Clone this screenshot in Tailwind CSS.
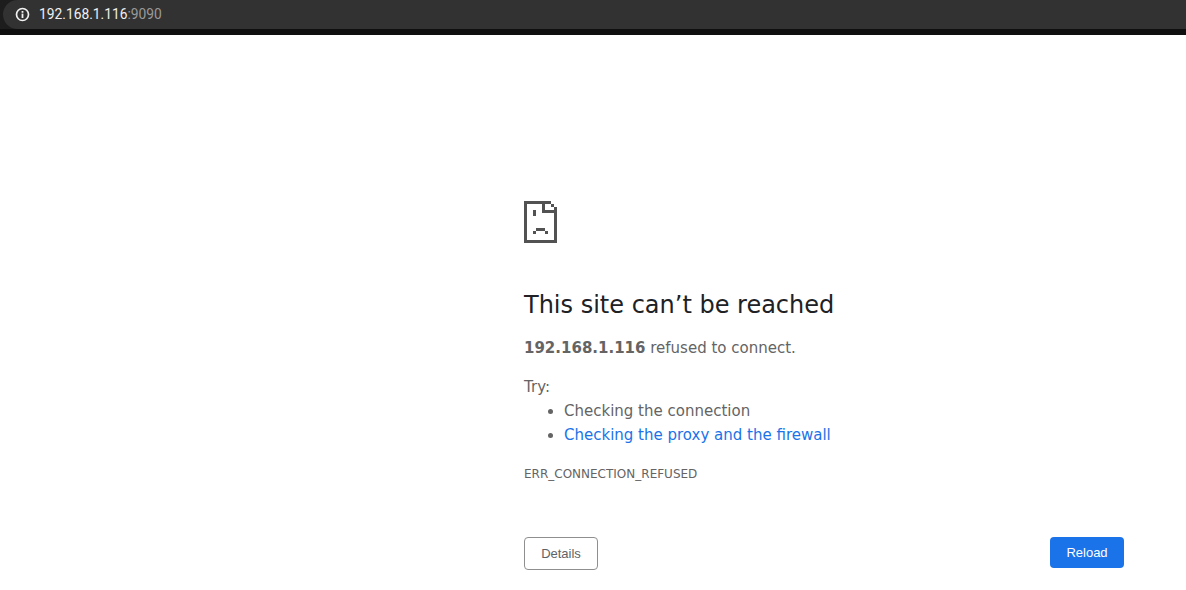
<!DOCTYPE html>
<html lang="en">
<head>
    <meta charset="UTF-8" />
    <title>192.168.1.116</title>
    <script src="https://cdn.jsdelivr.net/npm/@tailwindcss/browser@4"></script>
</head>
<body class="bg-white h-[590px] overflow-hidden font-['DejaVu_Sans',sans-serif]">
    <!-- address bar -->
    <div class="bg-[#0f0f0f] h-[35px]">
        <div class="bg-[#1d1d1d] h-[29px] pl-[3px]">
            <div class="h-[29px] bg-[#323232] rounded-l-[15px] flex items-center pl-[12px] gap-[9px] font-['Roboto',sans-serif] text-[13.8px]">
                <svg width="15" height="15" viewBox="0 0 15 15" fill="none">
                    <circle cx="7.5" cy="7.5" r="6" stroke="#f1f1f1" stroke-width="1.7"/>
                    <rect x="6.6" y="6.6" width="1.8" height="4.4" fill="#f1f1f1"/>
                    <rect x="6.6" y="4" width="1.8" height="1.8" fill="#f1f1f1"/>
                </svg>
                <span class="text-[#f0f0f0]">192.168.1.116<span class="text-[#9a9a9a]">:9090</span></span>
            </div>
        </div>
    </div>
    <!-- error page -->
    <main class="w-[600px] ml-[524px] pt-[166px] text-[#646464]">
        <svg width="33" height="42" viewBox="0 0 33 42" class="block" shape-rendering="crispEdges" fill="#525252">
            <path d="M0 0h27v3H3v36h27V6h3v36H0z"/>
            <path d="M18 3h3v6h12v3H18z"/>
            <rect x="27" y="3" width="3" height="3"/>
            <rect x="9" y="9" width="3" height="6"/>
            <rect x="12" y="27" width="9" height="3"/>
            <rect x="9" y="30" width="3" height="3"/>
            <rect x="21" y="30" width="3" height="3"/>
        </svg>
        <h1 class="mt-[47px] text-[24px] leading-[30px] font-normal text-[#202124]">This site can’t be reached</h1>
        <p class="mt-[18px] text-[15px] leading-[20px]"><b class="font-bold">192.168.1.116</b> refused to connect.</p>
        <p class="mt-[19px] text-[15px] leading-[20px]">Try:</p>
        <ul class="list-disc pl-[40px] mt-[2px] text-[15px] leading-[24px] marker:text-[#646464]">
            <li>Checking the connection</li>
            <li><a href="#" class="text-[#1a73e8]">Checking the proxy and the firewall</a></li>
        </ul>
        <div class="mt-[19px] text-[12px] leading-[16px]">ERR_CONNECTION_REFUSED</div>
        <div class="mt-[55px] flex justify-between font-['Liberation_Sans',sans-serif] text-[13px]">
            <button class="w-[74px] h-[33px] border border-[#8f8f8f] rounded-[4px] text-[#5f6368] bg-white">Details</button>
            <button class="w-[74px] h-[31px] rounded-[4px] text-white bg-[#1a73e8]">Reload</button>
        </div>
    </main>
</body>
</html>
